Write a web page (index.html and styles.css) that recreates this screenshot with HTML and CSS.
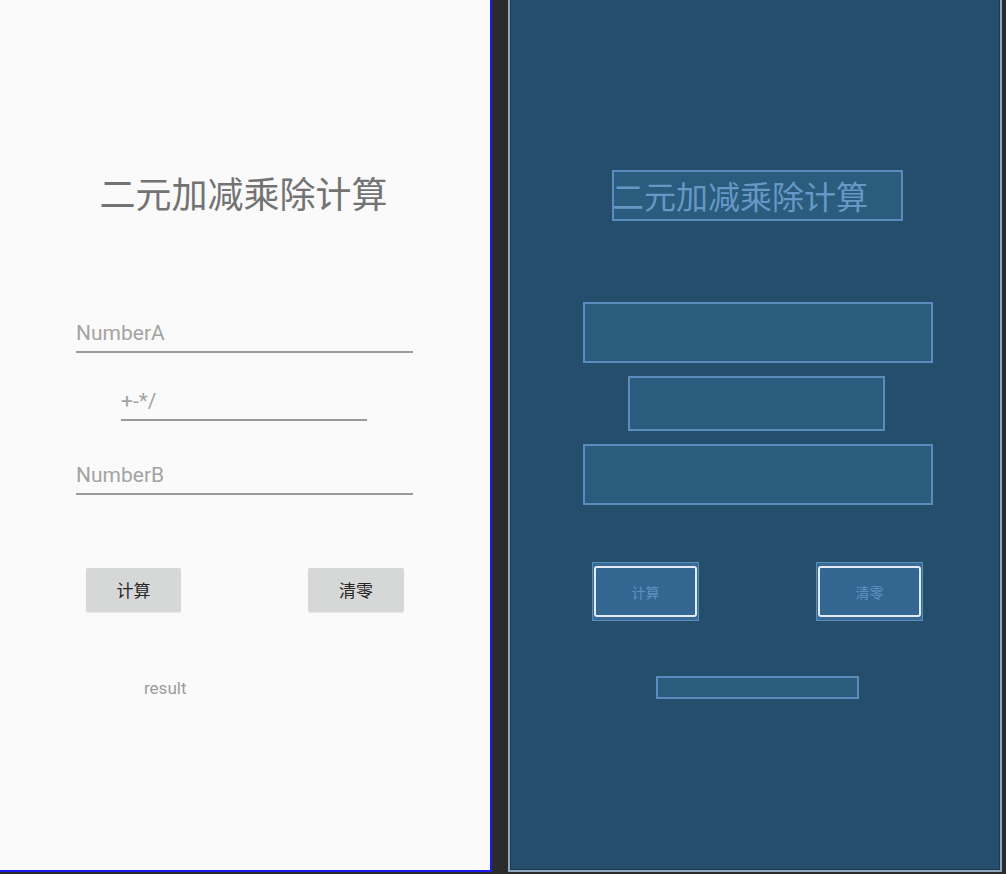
FILE: index.html
```html
<!DOCTYPE html>
<html lang="zh-CN">
<head>
<meta charset="utf-8">
<title>二元加减乘除计算</title>
<link rel="stylesheet" href="styles.css">
</head>
<body>
<div class="stage">
  <section class="phone">
    <div class="title">二元加减乘除计算</div>
    <div class="field field-a">NumberA</div>
    <div class="field field-op">+-*/</div>
    <div class="field field-b">NumberB</div>
    <div class="btn-row">
      <div class="btn btn-calc">计算</div>
      <div class="btn btn-clear">清零</div>
    </div>
    <div class="result">result</div>
  </section>
  <section class="blueprint">
    <div class="bp-box bp-title">二元加减乘除计算</div>
    <div class="bp-box bp-wide bp-first"></div>
    <div class="bp-box bp-op"></div>
    <div class="bp-box bp-wide bp-third"></div>
    <div class="bp-btn-row">
      <div class="bp-btn bp-btn-calc"><div class="bp-btn-inner">计算</div></div>
      <div class="bp-btn bp-btn-clear"><div class="bp-btn-inner">清零</div></div>
    </div>
    <div class="bp-box bp-result"></div>
  </section>
</div>
</body>
</html>
```
FILE: styles.css
```css
html, body {
  margin: 0;
  padding: 0;
  background: #2b2b2b;
}
body {
  width: 1006px;
  height: 874px;
  overflow: hidden;
  font-family: Roboto, "Noto Sans CJK SC", sans-serif;
}
.stage {
  display: flex;
  align-items: flex-start;
}

/* ---------- design preview ---------- */
.phone {
  box-sizing: content-box;
  width: 490px;
  height: 870px;
  background: #fafafa;
  border-right: 2px solid #1a1aee;
  border-bottom: 2px solid #1a1aee;
  flex: none;
}
.title {
  margin-top: 172px;
  height: 40px;
  line-height: 40px;
  text-align: center;
  font-family: "Noto Sans CJK SC", sans-serif;
  font-size: 36px;
  color: #737373;
  text-indent: -3px;
}
.field {
  box-sizing: border-box;
  height: 35px;
  line-height: 30px;
  padding-bottom: 3px;
  border-bottom: 2px solid #9b9b9b;
  font-family: Roboto, sans-serif;
  font-size: 21px;
  color: #a3a3a3;
}
.field-a {
  margin-top: 106px;
  margin-left: 76px;
  width: 337px;
}
.field-op {
  margin-top: 33px;
  margin-left: 121px;
  width: 246px;
}
.field-b {
  margin-top: 39px;
  margin-left: 76px;
  width: 337px;
}
.btn-row {
  display: flex;
  margin-top: 73px;
}
.btn {
  height: 44px;
  line-height: 44px;
  text-align: center;
  background: #d6d7d7;
  border-radius: 2px;
  font-family: "Noto Sans CJK SC", sans-serif;
  font-size: 17px;
  color: #262626;
  box-shadow: 0 0.5px 1px rgba(0, 0, 0, 0.08);
}
.btn-calc {
  margin-left: 86px;
  width: 95px;
}
.btn-clear {
  margin-left: 127px;
  width: 96px;
}
.result {
  margin-top: 66px;
  margin-left: 144px;
  height: 20px;
  line-height: 20px;
  font-size: 17px;
  color: #9c9c9c;
}

/* ---------- blueprint ---------- */
.blueprint {
  box-sizing: border-box;
  width: 494px;
  height: 872px;
  margin-left: 16px;
  background: #254e6d;
  border-left: 2px solid #8ea8bf;
  border-right: 2px solid #8ea8bf;
  border-bottom: 2px solid #8ea8bf;
  box-shadow: inset 1px 0 0 #1d3a52, inset -1px -1px 0 #1d3a52;
  flex: none;
  overflow: hidden;
}
.bp-box {
  box-sizing: border-box;
  background: #2b5b7d;
  border: 2px solid #5a8dbd;
}
.bp-title {
  margin-top: 170px;
  margin-left: 102px;
  width: 291px;
  height: 51px;
  line-height: 46px;
  text-indent: -2px;
  font-family: "Noto Sans CJK SC", sans-serif;
  font-size: 32px;
  color: #6698c6;
  white-space: nowrap;
  overflow: hidden;
}
.bp-wide {
  margin-left: 73px;
  width: 350px;
  height: 61px;
}
.bp-first {
  margin-top: 81px;
}
.bp-op {
  margin-top: 13px;
  margin-left: 118px;
  width: 257px;
  height: 55px;
}
.bp-third {
  margin-top: 13px;
}
.bp-btn-row {
  display: flex;
  margin-top: 57px;
}
.bp-btn {
  box-sizing: border-box;
  width: 107px;
  height: 59px;
  padding: 3px 1px;
  background: #3a6b96;
  border: 1px solid #5a8dbd;
}
.bp-btn-calc {
  margin-left: 82px;
}
.bp-btn-clear {
  margin-left: 117px;
}
.bp-btn-inner {
  box-sizing: border-box;
  height: 100%;
  border: 2px solid #e4ebf3;
  border-radius: 3px;
  background: #336791;
  display: flex;
  align-items: center;
  justify-content: center;
  font-family: "Noto Sans CJK SC", sans-serif;
  font-size: 14px;
  color: #5f91c1;
}
.bp-result {
  margin-top: 55px;
  margin-left: 146px;
  width: 203px;
  height: 23px;
}
```
